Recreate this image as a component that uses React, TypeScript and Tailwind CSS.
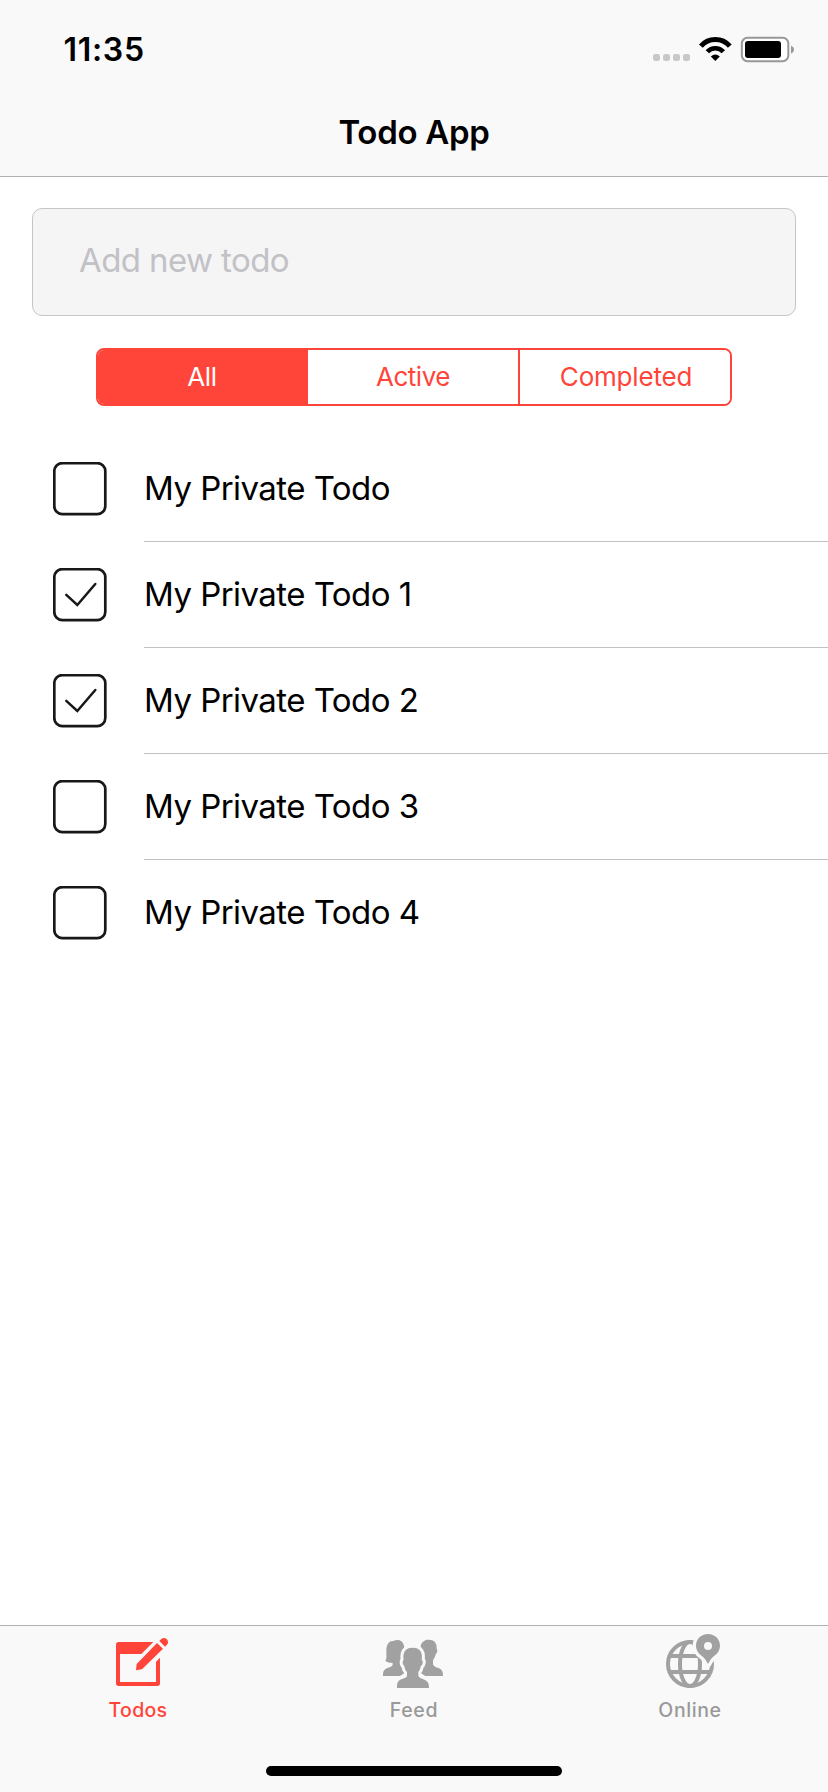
import React, { useState } from "react";

type Todo = { title: string; done: boolean };

const initialTodos: Todo[] = [
  { title: "My Private Todo", done: false },
  { title: "My Private Todo 1", done: true },
  { title: "My Private Todo 2", done: true },
  { title: "My Private Todo 3", done: false },
  { title: "My Private Todo 4", done: false },
];

const filters = [
  { name: "All", text: "tracking-[-0.4px]" },
  { name: "Active", text: "tracking-[-0.5px]" },
  { name: "Completed", text: "tracking-[-0.2px] pl-[2px]" },
];

function StatusIcons() {
  return (
    <svg className="h-[28px] w-[150px]" viewBox="60 45 450 84" fill="none">
      <g fill="#c8c8c8">
        <rect x="69" y="102" width="21" height="21" rx="7" />
        <rect x="99" y="102" width="21" height="21" rx="7" />
        <rect x="129" y="102" width="21" height="21" rx="7" />
        <rect x="159" y="102" width="21" height="21" rx="7" />
      </g>
      <path d="M212.6 78.6A57.5 57.5 0 0 1 299.4 78.6" stroke="#000" strokeWidth="15" />
      <path d="M232 95.5A32 32 0 0 1 280 95.5" stroke="#000" strokeWidth="13.5" />
      <path d="M242.500 109.500Q256 98 269.500 109.500L256 123Z" fill="#000" />
      <rect x="335.500" y="53.500" width="139.500" height="70" rx="17" fill="#fff" stroke="#989898" strokeWidth="6" />
      <rect x="345" y="63" width="108" height="51" rx="9" fill="#000" />
      <path d="M483 77Q492 80 492 89Q492 97 483 101Z" fill="#989898" />
    </svg>
  );
}

function Checkbox({ done }: { done: boolean }) {
  return (
    <svg className="h-[54px] w-[54px] shrink-0" viewBox="0 0 54 54" fill="none" stroke="#18181a">
      <rect x="1.3" y="1.100" width="51" height="51" rx="8" strokeWidth="2.7" />
      {done && <path d="M13.300 26.800L24.300 37L42.300 16" strokeWidth="2.500" strokeLinecap="round" strokeLinejoin="miter" />}
    </svg>
  );
}

function ComposeIcon() {
  return (
    <svg className="h-[66px] w-[76px]" viewBox="0 33 228 198" fill="#ff453a">
      <path
        fillRule="evenodd"
        d="M56 81H160L124 117H60V201H168V140L180 128V205Q180 213 172 213H56Q48 213 48 205V89Q48 81 56 81Z"
      />
      <path d="M171 84L189 101L126 163L108 166L110 147Z" />
      <path d="M178 78L184 72Q188 69 193 69Q204 71 204 82Q204 86 201 89L195 95Z" />
    </svg>
  );
}

function PeopleIcon() {
  return (
    <svg className="h-[66px] w-[88px]" viewBox="0 33 264 198" fill="#a1a1a1">
      <path d="M39 183C39 169 42 163 52 159C62 155 67 154 68 150V144C59 144 51 142 46 138C51 130 49 119 49 107C49 87 58 77 70 78C82 72 97 74 102 92L104 110V174L90 183Z" />
      <path d="M166 183L152 174V92C156 79 165 74 176 74C192 74 201 84 200 99C200 102 200 104 202 106C202 112 200 116 197 118C195 127 192 131 189 135V148C190 154 198 157 207 160C216 164 219 170 219 183Z" />
      <path
        d="M81 219C81 203 84 197 94 193C104 189 110 188 111 182V171C107 167 104 162 103 153C99 150 98 145 98 140C98 137 100 136 101 136C97 112 106 98 128 98C150 98 159 112 155 136C158 137 159 140 158 144C157 149 155 152 152 154C151 162 149 167 145 171V182C147 188 153 190 163 194C173 198 177 204 177 219Z"
        stroke="#f9f9f9"
        strokeWidth="18"
        strokeLinejoin="round"
        paintOrder="stroke"
      />
    </svg>
  );
}

function GlobePinIcon() {
  return (
    <svg className="h-[66px] w-[90px]" viewBox="0 33 270 198" fill="none">
      <g stroke="#a1a1a1" strokeWidth="12">
        <circle cx="135" cy="147" r="66" />
        <ellipse cx="135" cy="147" rx="30" ry="66" />
        <path d="M72 123H199M72 171H199" />
      </g>
      <path
        d="M189 57C209 57 225 72 225 92C225 106 216 117 207 123C199 130 194 137 189 147C184 137 179 130 171 123C162 117 153 106 153 92C153 72 169 57 189 57Z"
        fill="#a1a1a1"
        stroke="#f9f9f9"
        strokeWidth="20"
        strokeLinejoin="round"
        paintOrder="stroke"
      />
      <circle cx="189" cy="93" r="12" fill="#f9f9f9" />
    </svg>
  );
}

export default function App() {
  const [todos, setTodos] = useState(initialTodos);
  const [filter, setFilter] = useState("All");

  const toggle = (title: string) =>
    setTodos(todos.map((t) => (t.title === title ? { ...t, done: !t.done } : t)));
  const visible = todos.filter((t) => filter === "All" || t.done === (filter === "Completed"));

  return (
    <div className="flex h-[1792px] w-[828px] flex-col bg-white font-['Inter',sans-serif] text-black">
      <header className="h-[177px] shrink-0 border-b border-[#b2b2b2] bg-[#f9f9f9]">
        <div className="flex h-[88px] items-start justify-between pr-[28px] pl-[63.500px]">
          <span className="mt-[30px] text-[32px] leading-[40px] font-semibold tracking-[0.700px]">11:35</span>
          <div className="mt-[35px]">
            <StatusIcons />
          </div>
        </div>
        <h1 className="text-center text-[33px] leading-[88px] font-semibold tracking-[-0.3px]">Todo App</h1>
      </header>

      <main className="flex grow flex-col pt-[31px]">
        <input
          className="mx-8 h-[108px] rounded-[10px] border border-[#c5c5c7] bg-[#f5f5f5] px-[46px] pb-[4px] text-[33px] tracking-[-0.6px] outline-none placeholder:text-[#c1c1c6]"
          placeholder="Add new todo"
        />
        <div className="mx-24 mt-[32px] grid h-[58px] grid-cols-[210px_212px_210px] overflow-hidden rounded-[8px] border-2 border-[#ff453a]">
          {filters.map((f, i) => (
            <button
              key={f.name}
              onClick={() => setFilter(f.name)}
              className={`text-[26px] leading-[54px] ${f.text} ${i < 2 ? "border-r-2 border-[#ff453a]" : ""} ${
                filter === f.name ? "bg-[#ff453a] text-white" : "bg-white text-[#ff453a]"
              }`}
            >
              {f.name}
            </button>
          ))}
        </div>

        <ul className="mt-[30px]">
          {visible.map((t, i) => (
            <li key={t.title} onClick={() => toggle(t.title)} className="flex h-[106px] items-center pl-[53px]">
              <Checkbox done={t.done} />
              <div
                className={`ml-[37px] h-full grow border-b text-[33px] leading-[104px] tracking-[-0.55px] ${
                  i < visible.length - 1 ? "border-[#c2c2c5]" : "border-transparent"
                }`}
              >
                {t.title}
              </div>
            </li>
          ))}
        </ul>
      </main>

      <footer className="flex h-[167px] shrink-0 flex-col border-t border-[#b2b2b2] bg-[#f9f9f9]">
        <nav className="grid grid-cols-3 text-[19.500px] leading-[36px] font-medium text-[#999999]">
          <a className="flex flex-col items-center text-[#ff453a]">
            <ComposeIcon />
            <span className="tracking-[0.3px]">Todos</span>
          </a>
          <a className="flex flex-col items-center">
            <PeopleIcon />
            <span className="tracking-[0.7px]">Feed</span>
          </a>
          <a className="flex flex-col items-center">
            <GlobePinIcon />
            <span className="tracking-[0.6px]">Online</span>
          </a>
        </nav>
        <div className="mx-auto mt-auto mb-[16px] h-[10px] w-[296px] rounded-full bg-black" />
      </footer>
    </div>
  );
}
